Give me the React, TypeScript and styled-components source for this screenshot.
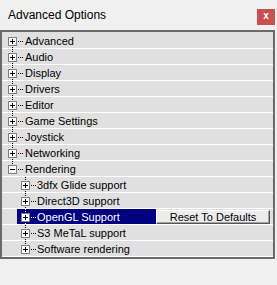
import React from "react";
import styled, { createGlobalStyle } from "styled-components";

const GlobalStyle = createGlobalStyle`
  html, body { margin: 0; padding: 0; background: #f0f0f0; }
  body { font-family: "Liberation Sans", Arial, sans-serif; }
`;

const Window = styled.div`
  width: 277px;
  height: 285px;
  background: #f0f0f0;
  display: flex;
  flex-direction: column;
  overflow: hidden;
`;

const TitleBar = styled.div`
  height: 30px;
  display: flex;
  justify-content: space-between;
  align-items: flex-start;
  padding: 0 2px 0 8px;
  box-sizing: border-box;
`;

const Title = styled.div`
  font-size: 12px;
  line-height: 14px;
  margin-top: 8px;
  color: #000;
`;

const CloseButton = styled.div`
  width: 18px;
  height: 16px;
  margin-top: 9px;
  background: #c75050;
  color: #fff;
  font-size: 10px;
  font-weight: bold;
  line-height: 14px;
  text-align: center;
`;

const Panel = styled.div`
  width: 275px;
  border: 2px solid #6a6a6a;
  box-sizing: border-box;
  background: #e0e0e0;
  padding-top: 1px;
  display: flex;
  flex-direction: column;
`;

const Row = styled.div`
  height: 15px;
  border-bottom: 1px solid #ffffff;
  display: flex;
`;

const NameCell = styled.div`
  width: 154px;
  display: flex;
  flex-shrink: 0;
`;

const NameBody = styled.div<{ $selected: boolean }>`
  flex: 1;
  display: flex;
  background: ${(p) => (p.$selected ? "#000080" : "transparent")};
`;

const Label = styled.span<{ $selected: boolean }>`
  font-size: 11px;
  line-height: 15px;
  padding-top: 1px;
  height: 14px;
  white-space: nowrap;
  color: ${(p) => (p.$selected ? "#ffffff" : "#000000")};
`;

const ValueCell = styled.div`
  flex: 1;
  display: flex;
  align-items: flex-start;
`;

const ResetButton = styled.div`
  width: 114px;
  height: 14px;
  margin-top: 1px;
  box-sizing: border-box;
  background: #ececec;
  border-top: 1px solid #ffffff;
  border-left: 1px solid #ffffff;
  border-right: 1px solid #555555;
  border-bottom: 1px solid #555555;
  box-shadow: inset -1px -1px 0 #a0a0a0;
  font-size: 11px;
  line-height: 12px;
  text-align: center;
  color: #000;
  white-space: nowrap;
`;

type Item = {
  label: string;
  level: 0 | 1;
  expanded?: boolean;
  selected?: boolean;
  first?: boolean;
  last?: boolean;
};

const items: Item[] = [
  { label: "Advanced", level: 0, first: true },
  { label: "Audio", level: 0 },
  { label: "Display", level: 0 },
  { label: "Drivers", level: 0 },
  { label: "Editor", level: 0 },
  { label: "Game Settings", level: 0 },
  { label: "Joystick", level: 0 },
  { label: "Networking", level: 0 },
  { label: "Rendering", level: 0, expanded: true, last: true },
  { label: "3dfx Glide support", level: 1 },
  { label: "Direct3D support", level: 1 },
  { label: "OpenGL Support", level: 1, selected: true },
  { label: "S3 MeTaL support", level: 1 },
  { label: "Software rendering", level: 1, last: true },
];

const VDots = ({ x, from, to, color }: { x: number; from: number; to: number; color: string }) => {
  const out: React.ReactNode[] = [];
  for (let y = from; y <= to; y++) {
    if (y % 2 === 0) out.push(<rect key={y} x={x} y={y} width={1} height={1} fill={color} />);
  }
  return <>{out}</>;
};

const HDots = ({ from, to, y, color }: { from: number; to: number; y: number; color: string }) => {
  const out: React.ReactNode[] = [];
  for (let x = from; x <= to; x += 2) out.push(<rect key={x} x={x} y={y} width={1} height={1} fill={color} />);
  return <>{out}</>;
};

const ExpandBox = ({ x, expanded }: { x: number; expanded?: boolean }) => (
  <>
    <rect x={x + 0.5} y={4.5} width={8} height={8} fill="#ffffff" stroke="#808080" strokeWidth={1} />
    <rect x={x + 2} y={8} width={5} height={1} fill="#000" />
    {!expanded && <rect x={x + 4} y={6} width={1} height={5} fill="#000" />}
  </>
);

const RootGutter = ({ item }: { item: Item }) => (
  <svg width={15} height={15} shapeRendering="crispEdges" style={{ flexShrink: 0 }}>
    {item.level === 0 && (
      <>
        {!item.first && <VDots x={10} from={0} to={3} color="#000" />}
        {!item.last && <VDots x={10} from={13} to={14} color="#000" />}
        <ExpandBox x={6} expanded={item.expanded} />
      </>
    )}
  </svg>
);

const ItemGutter = ({ item }: { item: Item }) => {
  const c = item.selected ? "#ffffff" : "#000";
  if (item.level === 0) {
    return (
      <svg width={8} height={15} shapeRendering="crispEdges" style={{ flexShrink: 0 }}>
        <HDots from={1} to={5} y={8} color="#000" />
      </svg>
    );
  }
  return (
    <svg width={20} height={15} shapeRendering="crispEdges" style={{ flexShrink: 0 }}>
      <VDots x={8} from={0} to={3} color={c} />
      {!item.last && <VDots x={8} from={13} to={14} color={c} />}
      <ExpandBox x={4} />
      <HDots from={14} to={18} y={8} color={c} />
    </svg>
  );
};

export default function App() {
  return (
    <>
      <GlobalStyle />
      <Window>
        <TitleBar>
          <Title>Advanced Options</Title>
          <CloseButton>x</CloseButton>
        </TitleBar>
        <Panel>
          {items.map((it) => (
            <Row key={it.label}>
              <NameCell>
                <RootGutter item={it} />
                <NameBody $selected={!!it.selected}>
                  <ItemGutter item={it} />
                  <Label $selected={!!it.selected}>{it.label}</Label>
                </NameBody>
              </NameCell>
              <ValueCell>{it.selected && <ResetButton>Reset To Defaults</ResetButton>}</ValueCell>
            </Row>
          ))}
        </Panel>
      </Window>
    </>
  );
}
